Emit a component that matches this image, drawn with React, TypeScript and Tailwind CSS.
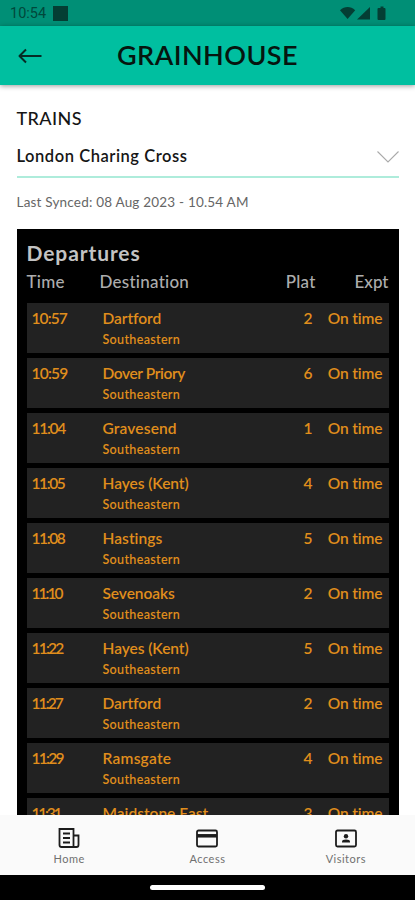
import React from "react";

type Departure = { time: string; destination: string; platform: string; tracking: string; timeTracking: string };

const departures: Departure[] = [
  { time: "10:57", destination: "Dartford", platform: "2", tracking: "tracking-[-0.05px]", timeTracking: "tracking-[-0.9px]" },
  { time: "10:59", destination: "Dover Priory", platform: "6", tracking: "tracking-[-0.4px]", timeTracking: "tracking-[-0.8px]" },
  { time: "11:04", destination: "Gravesend", platform: "1", tracking: "tracking-[0.15px]", timeTracking: "tracking-[-1.3px]" },
  { time: "11:05", destination: "Hayes (Kent)", platform: "4", tracking: "tracking-[-0.05px]", timeTracking: "tracking-[-1.4px]" },
  { time: "11:08", destination: "Hastings", platform: "5", tracking: "tracking-[0.05px]", timeTracking: "tracking-[-1.4px]" },
  { time: "11:10", destination: "Sevenoaks", platform: "2", tracking: "tracking-[-0.05px]", timeTracking: "tracking-[-2px]" },
  { time: "11:22", destination: "Hayes (Kent)", platform: "5", tracking: "tracking-[-0.05px]", timeTracking: "tracking-[-1.8px]" },
  { time: "11:27", destination: "Dartford", platform: "2", tracking: "tracking-[-0.05px]", timeTracking: "tracking-[-1.9px]" },
  { time: "11:29", destination: "Ramsgate", platform: "4", tracking: "tracking-[0.25px]", timeTracking: "tracking-[-1.7px]" },
  { time: "11:31", destination: "Maidstone East", platform: "3", tracking: "tracking-[0px]", timeTracking: "tracking-[-2.2px]" },
];

function StatusBar() {
  return (
    <div className="flex h-[26px] shrink-0 items-center bg-[#008f76] pl-[10px] pr-[28px] text-[#00483b]">
      <span className="pt-[2px] font-[Roboto,sans-serif] text-[14.5px] leading-none">10:54</span>
      <span className="ml-[7px] mt-[1px] h-[15px] w-[15px] bg-[#043e34]" />
      <svg className="ml-auto mt-px" width="47" height="15" viewBox="0 0 47 15" fill="#043e34">
        <path d="M0 4.200C4.600 0 10.600 0 15.200 4.200L7.600 13z" />
        <path d="M30 1v12.500H17z" />
        <path d="M40.500 2h1.500V.5h3V2h1q1 0 1 1v10q0 1-1 1h-6q-1 0-1-1V3q0-1 1-1z" transform="translate(-1.500 0)" />
      </svg>
    </div>
  );
}

function Header() {
  return (
    <header className="relative z-10 flex h-[59px] shrink-0 items-center bg-[#00bfa0] shadow-[0_1px_5px_rgba(0,0,0,0.4)]">
      <svg className="ml-[18px]" width="24" height="16" viewBox="0 0 24 16" fill="none" stroke="#062b25" strokeWidth="2" strokeLinejoin="round">
        <path d="M23.500 8H2M8 1.500L1.500 8L8 14.500" />
      </svg>
      <h1 className="ml-[75px] pb-[2px] text-[27px] font-semibold leading-none tracking-[0.45px] text-[#06150f]">GRAINHOUSE</h1>
    </header>
  );
}

function DepartureRow({ item }: { item: Departure }) {
  return (
    <div className="flex h-[50px] shrink-0 bg-[#222222] pl-[5px] pr-[6px] pt-[6px] text-[15.5px] font-semibold leading-[19px] text-[#e08e1c]">
      <span className={`w-[71px] whitespace-nowrap ${item.timeTracking}`}>{item.time}</span>
      <div className="flex-1">
        <div className={`whitespace-nowrap ${item.tracking}`}>{item.destination}</div>
        <div className="mt-[3px] text-[12.5px] leading-[17px] tracking-[0.33px]">Southeastern</div>
      </div>
      <span className="w-[20px] text-right">{item.platform}</span>
      <span className="w-[70px] whitespace-nowrap text-right tracking-[-0.1px]">On time</span>
    </div>
  );
}

function NavItem({ label, children }: { label: string; children: React.ReactNode }) {
  return (
    <div className="flex flex-1 flex-col items-center pt-[11px]">
      <svg width="24" height="24" viewBox="0 0 24 24" fill="none" stroke="#1c1c1c" strokeWidth="1.8">
        {children}
      </svg>
      <span className="mt-[2px] text-[11px] leading-[14px] tracking-[0.5px] text-[#707070]">{label}</span>
    </div>
  );
}

export default function App() {
  return (
    <div className="flex h-[900px] w-[415px] flex-col overflow-hidden bg-white font-[Lato,sans-serif] [font-variant-ligatures:none]">
      <StatusBar />
      <Header />
      <main className="flex min-h-0 flex-1 flex-col px-[16.5px] pt-[22px]">
        <h2 className="h-[22px] text-[18px] font-medium leading-[22px] tracking-[0.4px] text-[#161616]">TRAINS</h2>
        <div className="mt-[11px] flex h-[36px] shrink-0 items-start justify-between">
          <span className="pt-[5px] text-[16.5px] font-semibold leading-[22px] tracking-[0.55px] text-[#161616]">London Charing Cross</span>
          <svg className="mt-[10px]" width="22" height="14" viewBox="0 0 22 14" fill="none" stroke="#aaa" strokeWidth="1.1">
            <path d="M.5 1.500L11 12L21.500 1.500" />
          </svg>
        </div>
        <div className="h-[2px] shrink-0 bg-[#aeecdb]" />
        <p className="mt-[14px] h-[20px] shrink-0 text-[13.5px] leading-[20px] tracking-[0.2px] text-[#666]">Last Synced: 08 Aug 2023 - 10.54 AM</p>
        <section className="mt-[17px] flex min-h-0 flex-1 flex-col overflow-hidden bg-black px-[10px] pt-[11px]">
          <h3 className="h-[25px] shrink-0 text-[21px] font-bold leading-[25px] tracking-[0.9px] text-[#c3c3c3]">Departures</h3>
          <div className="mt-[6px] flex h-[22px] shrink-0 text-[17px] font-medium leading-[22px] text-[#adadad]">
            <span className="w-[73px] tracking-[0.3px]">Time</span>
            <span className="flex-1 tracking-[0.25px]">Destination</span>
            <span className="tracking-[0.2px]">Plat</span>
            <span className="w-[73px] text-right">Expt</span>
          </div>
          <div className="mt-[10px] flex flex-col gap-[5px]">
            {departures.map((item) => <DepartureRow key={item.time} item={item} />)}
          </div>
        </section>
      </main>
      <nav className="flex h-[60px] shrink-0 bg-[#fafafa]">
        <NavItem label="Home">
          <path d="M2.500 3h14v18h-12q-2 0-2-2zM16.500 9.500h5v9.500q0 2-2 2h-3M6 7.500h7M6 12h7M6 16.500h7" />
        </NavItem>
        <NavItem label="Access">
          <rect x="2" y="4.500" width="20" height="16" rx="1.500" />
          <path d="M2 9.800h20" strokeWidth="3.500" />
        </NavItem>
        <NavItem label="Visitors">
          <rect x="2" y="4.500" width="20" height="16" rx="1.500" />
          <circle cx="12" cy="10.200" r="2.200" fill="#1c1c1c" stroke="none" />
          <path d="M8 16.500v-1q0-2 4-2t4 2v1z" fill="#1c1c1c" stroke="none" />
        </NavItem>
      </nav>
      <div className="flex h-[25px] shrink-0 items-center justify-center bg-black">
        <span className="h-[5px] w-[115px] rounded-full bg-white" />
      </div>
    </div>
  );
}
